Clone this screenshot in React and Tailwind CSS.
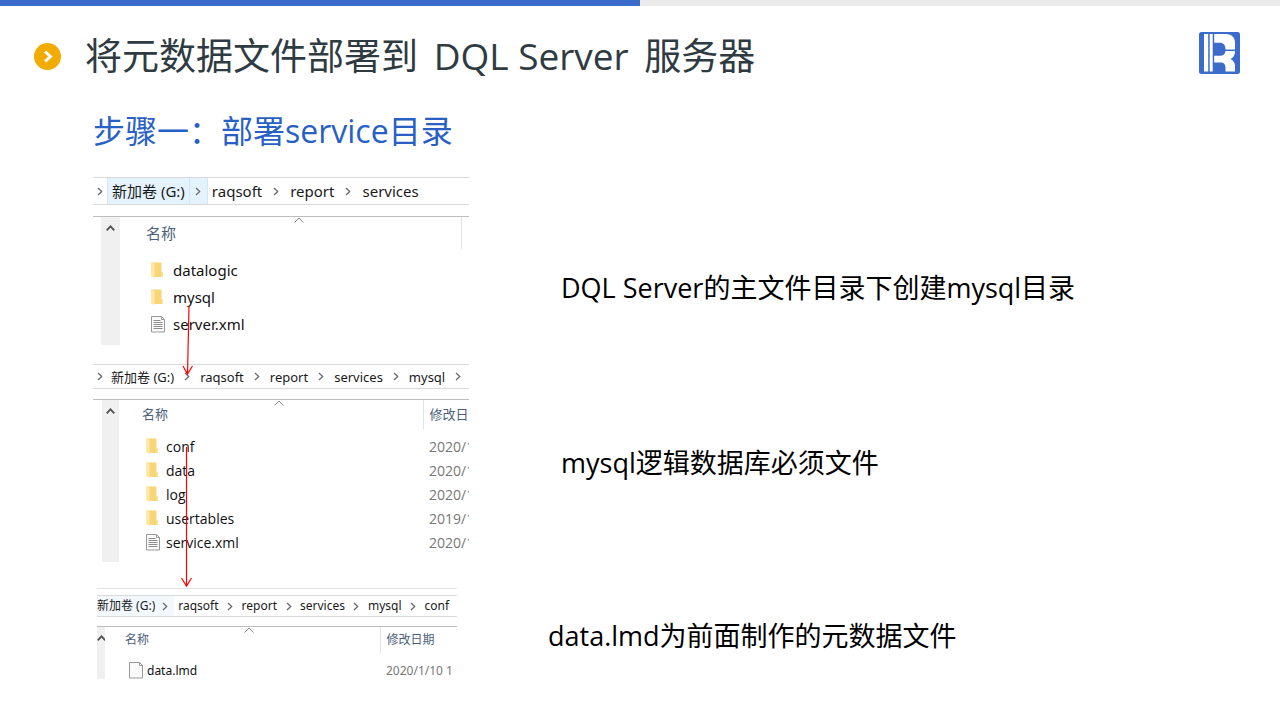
import { Fragment } from 'react'

const panels = [
  {
    crumbs: ['新加卷 (G:)', 'raqsoft', 'report', 'services'],
    leading: true,
    frame: 'w-[376px]',
    bar: 'h-7 text-[15px] leading-5',
    rootCrumb: 'bg-[#e5f3ff] border-x border-[#cce8ff] px-1 h-full',
    sep: 'w-7',
    firstSep: 'w-[18px] mr-1 bg-[#e5f3ff] border-r border-[#cce8ff] h-full',
    leadSep: 'w-[14px]',
    body: 'mt-[11px] h-[129px] pl-2',
    strip: 'w-[19px]',
    table: 'ml-[18px] text-[15px]',
    head: 'h-8 text-[15px] pl-2',
    nameCol: 'w-[323px]',
    spacer: 'h-2',
    row: 'h-[27px]',
    cell: 'pl-[13px] gap-2',
    files: [
      { name: 'datalogic', type: 'folder' },
      { name: 'mysql', type: 'folder' },
      { name: 'server.xml', type: 'text' }
    ]
  },
  {
    crumbs: ['新加卷 (G:)', 'raqsoft', 'report', 'services', 'mysql'],
    leading: true,
    trailing: true,
    frame: 'mt-[19px] w-[376px]',
    bar: 'h-[25px] text-[13px] leading-5',
    rootCrumb: 'ml-1',
    sep: 'w-[26px]',
    firstSep: 'w-[26px]',
    leadSep: 'w-[14px]',
    body: 'mt-[10px] h-[163px] pl-[9px]',
    strip: 'w-[17px]',
    table: "ml-[17px] text-sm font-['Open_Sans','Noto_Sans_CJK_SC',sans-serif]",
    head: 'h-[29px] text-[13px] pl-[6px]',
    nameCol: 'w-[287px]',
    spacer: 'h-[6px]',
    row: 'h-6',
    cell: 'pl-[10px] gap-[6px]',
    dateTitle: '修改日',
    files: [
      { name: 'conf', type: 'folder', date: '2020/1' },
      { name: 'data', type: 'folder', date: '2020/1' },
      { name: 'log', type: 'folder', date: '2020/1' },
      { name: 'usertables', type: 'folder', date: '2019/1' },
      { name: 'service.xml', type: 'text', date: '2020/1' }
    ]
  },
  {
    crumbs: ['新加卷 (G:)', 'raqsoft', 'report', 'services', 'mysql', 'conf'],
    frame: 'mt-[26px] ml-1 w-[360px] border-t border-[#e3e3e3] pt-[6px]',
    bar: 'h-[22px] text-[12px] leading-5',
    rootCrumb: 'bg-[#f2f8fd] h-full',
    sep: 'w-[23px]',
    firstSep: 'w-[19px] mr-1 bg-[#f2f8fd] h-full',
    body: 'mt-[9px] h-[53px]',
    strip: 'w-2',
    table: 'ml-[14px] text-[12px]',
    head: 'h-[26px] text-[12px] pl-[6px]',
    nameCol: 'w-[261px]',
    spacer: 'h-[6px]',
    row: 'h-6',
    cell: 'pl-[10px] gap-1',
    dateTitle: '修改日期',
    files: [{ name: 'data.lmd', type: 'blank', date: '2020/1/10 1' }]
  }
]

function Chevron({ className = '' }) {
  return (
    <span className={`flex shrink-0 items-center justify-center ${className}`}>
      <svg width="6" height="9" viewBox="0 0 6 9" fill="none" stroke="#6b6b6b" strokeWidth="1.3">
        <path d="M1 1l3.7 3.5L1 8" />
      </svg>
    </span>
  )
}

function FileIcon({ type }) {
  if (type === 'folder') {
    return (
      <svg width="14" height="18" viewBox="0 0 14 18" className="shrink-0">
        <path d="M0 0.500h10.500v10h1.500v4.500H4l-4-1z" fill="#f8d678" />
        <path d="M0 0.500l3.500 1.500v14l-3.500-1.500z" fill="#ffe9a9" />
        <path d="M10.500 10.500H12v4.500h-1.500z" fill="#fbe29a" />
      </svg>
    )
  }
  return (
    <svg width="14" height="18" viewBox="0 0 14 18" fill="none" className="shrink-0">
      <path d="M.5 .5h10l3 3v12.500H.5z" fill="#fafafa" stroke="#999" />
      <path d="M10.500 .5v3h3" stroke="#999" />
      {type === 'text' && <path d="M2.500 4.500h7M2.500 6.500h9M2.500 8.500h9M2.500 10.500h9M2.500 12.500h9" stroke="#8d8d8d" />}
    </svg>
  )
}

function Explorer({ panel }) {
  return (
    <section className={`overflow-hidden whitespace-nowrap ${panel.frame}`}>
      <nav className={`flex items-center border-y border-[#d9d9d9] text-[#1a1a1a] ${panel.bar}`}>
        {panel.leading && <Chevron className={panel.leadSep} />}
        {panel.crumbs.map((crumb, index) => (
          <Fragment key={crumb}>
            {index > 0 && <Chevron className={index === 1 ? panel.firstSep : panel.sep} />}
            <button className={`shrink-0 ${index === 0 ? panel.rootCrumb : ''}`}>{crumb}</button>
          </Fragment>
        ))}
        {panel.trailing && <Chevron className={panel.sep} />}
      </nav>

      <div className={`flex overflow-hidden border-t border-[#bdbdbd] ${panel.body}`}>
        <button aria-label="Scroll up" className={`flex shrink-0 items-start justify-center overflow-hidden bg-[#f0f0f0] pt-2 ${panel.strip}`}>
          <svg width="9" height="6" viewBox="0 0 9 6" fill="none" stroke="#505050" strokeWidth="1.8" className="shrink-0">
            <path d="M.7 5.300l3.800-4 3.800 4" />
          </svg>
        </button>
        <div className="min-w-0 flex-1 overflow-hidden">
          <table className={`w-full table-fixed border-collapse ${panel.table}`}>
            <thead>
              <tr>
                <th className={`relative border-r border-[#e2e2e2] p-0 text-left font-normal text-[#4c607a] ${panel.nameCol} ${panel.head}`}>
                  名称
                  <svg width="11" height="6" viewBox="0 0 11 6" fill="none" stroke="#8a8a8a" className="absolute top-0 left-1/2 -translate-x-1/2">
                    <path d="M1 5.500l4.500-4.500L10 5.500" />
                  </svg>
                </th>
                <th className={`p-0 text-left font-normal text-[#4c607a] ${panel.head}`}>{panel.dateTitle}</th>
              </tr>
            </thead>
            <tbody>
              <tr aria-hidden="true">
                <td className={`p-0 ${panel.spacer}`}></td>
              </tr>
              {panel.files.map((file) => (
                <tr key={file.name} className={panel.row}>
                  <td className="p-0">
                    <div className={`flex items-center text-[#111] ${panel.cell}`}>
                      <FileIcon type={file.type} />
                      {file.name}
                    </div>
                  </td>
                  <td className="p-0 pl-[6px] text-[#777]">{file.date}</td>
                </tr>
              ))}
            </tbody>
          </table>
        </div>
      </div>
    </section>
  )
}

function Logo() {
  return (
    <svg width="41" height="42" viewBox="0 0 41 42" className="mt-[6px] shrink-0">
      <rect width="41" height="42" rx="2.500" fill="#3b6ccc" />
      <path d="M5 2h4.200v37.500H5zM10.700 2h3v37.500h-3z" fill="#fff" />
      <path d="M15.200 2H27c5.500 0 9 3.500 9 8.500v7h-9.500c0-4.500-2-6.800-5.500-6.800h-5.800z" fill="#fff" />
      <path d="M26.500 19H36c0 4-1.500 6.500-4.500 8 3 1.500 4.500 4 4.500 7v5.500h-9.500V36c0-3.500-1.500-5.500-5-5.500h-6.300v-6.800H21c3.500 0 5.200-1.500 5.500-4.700z" fill="#fff" />
    </svg>
  )
}

export default function App() {
  return (
    <div className="min-h-screen bg-white font-['Open_Sans','Noto_Sans_CJK_SC',sans-serif]">
      <div className="flex h-[6px] bg-[#ebebeb]">
        <div className="w-1/2 bg-[#3b6ccc]"></div>
      </div>

      <header className="flex items-start justify-between pt-5 pr-10 pl-[34px]">
        <div className="flex items-center gap-6">
          <svg width="27" height="27" viewBox="0 0 27 27" className="shrink-0">
            <circle cx="13.500" cy="13.500" r="13.500" fill="#f2ab00" />
            <path d="M11 8.500l5.500 5-5.500 5" fill="none" stroke="#fff" strokeWidth="3" />
          </svg>
          <h1 className="text-[37px] leading-[60px] text-[#2f3b42]">
            将元数据文件部署到 <span className="mx-[6px]">DQL Server</span> 服务器
          </h1>
        </div>
        <Logo />
      </header>

      <main className="pl-[93px]">
        <h2 className="pt-5 text-[32px] leading-[50px] text-[#2860c4]">步骤一：部署service目录</h2>

        <div className="mt-[21px] flex">
          <div className="relative w-[376px] shrink-0 font-['Noto_Sans','Noto_Sans_CJK_SC',sans-serif]">
            {panels.map((panel) => (
              <Explorer key={panel.crumbs.length} panel={panel} />
            ))}
            <svg width="376" height="502" viewBox="0 0 376 502" fill="none" stroke="#f00" strokeWidth="1.200" className="pointer-events-none absolute top-0 left-0">
              <path d="M96 129L94.500 197M90 189l4.500 8 5-8" />
              <path d="M93.500 270v139M88.500 401l5 8 5-8" />
            </svg>
          </div>

          <div className="flex flex-col pt-[91px] pl-[92px] text-[27px] leading-10 text-black">
            <p>DQL Server的主文件目录下创建mysql目录</p>
            <p className="mt-[135px]">mysql逻辑数据库必须文件</p>
            <p className="mt-[133px] -ml-[13px]">data.lmd为前面制作的元数据文件</p>
          </div>
        </div>
      </main>
    </div>
  )
}
